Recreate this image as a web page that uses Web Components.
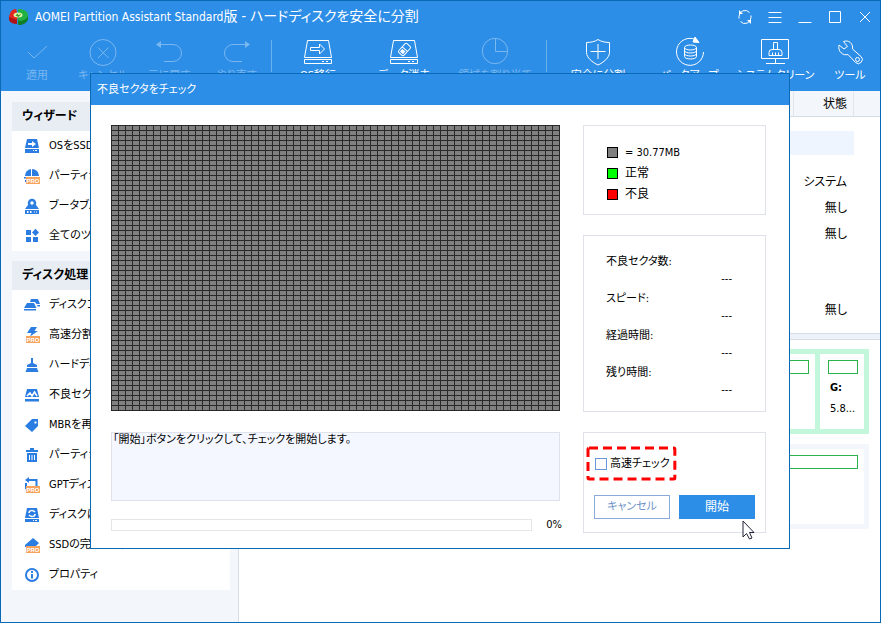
<!DOCTYPE html>
<html lang="ja">
<head>
<meta charset="utf-8">
<title>AOMEI Partition Assistant Standard版</title>
<style>
html, body { height: 100%; margin: 0; }
body {
  font: 11px/16px "DejaVu Sans Condensed", "Noto Sans CJK JP", sans-serif;
  font-feature-settings: "palt";
  color: #000;
  overflow: hidden;
  --blue: #2d8ee7;
  --edge: #0a69b5;
  --pale: #f3f6fb;
  --line: #dfe2eb;
}
</style>
</head>
<body>
<pa-window></pa-window>
<script>
const PRO = '<path d="M2 9h14v7H2z" fill="#f7a35c" stroke="none"/><text x="9" y="15" text-anchor="middle" font-family="Liberation Sans, sans-serif" font-size="6" font-weight="700" fill="#fff" stroke="none">PRO</text>';
const DISK = '<path d="M5.500 4.500h21l3 17h-27zM2.500 23.500h27v4h-27z"/><path d="M20 25.500h2M24 25.500h2"/>';
const ICONS = {
  check: [32, '<path d="M7 16l6 6L26 10"/>'],
  cancel: [32, '<circle cx="16" cy="16.500" r="13"/><path d="M11 11.500l10.500 10.500M21.500 11.500L11 22"/>'],
  undo: [32, '<path d="M5 8.500h15a8.500 8.500 0 0 1 0 17h-9"/><path d="M3 8.500l5-3.500v7z" fill="currentColor" stroke="none"/>'],
  redo: [32, '<path d="M27 8.500H12a8.500 8.500 0 0 0 0 17h9"/><path d="M29 8.500l-5-3.500v7z" fill="currentColor" stroke="none"/>'],
  migrate: [32, DISK + '<path d="M8.500 11.500h9V8l5 5-5 5v-3.500h-9z"/>'],
  erase: [32, DISK + '<g transform="rotate(42 16.500 13.500)"><rect x="13" y="7.500" width="7" height="12" rx="1.500"/><path d="M13 13h7"/><rect x="15" y="15" width="3" height="2.500" fill="currentColor"/></g>'],
  pie: [32, '<circle cx="16" cy="15" r="12.700"/><path d="M16.500 2.500v13h12.500"/>'],
  shield: [32, '<path d="M16 3.500c3 2 7 3 11.500 3v10c0 5-6 10-11.500 12.500C10.500 26.500 4.500 21.500 4.500 16.500v-10c4.500 0 8.500-1 11.500-3z"/><path d="M16 8v15M8.500 15.500h15"/>'],
  backup: [32, '<path d="M21.500 3.500a13.500 13.500 0 1 0 8 12.500"/><path d="M21 1l4 5.500-6-.500z" fill="currentColor"/><ellipse cx="16.500" cy="11.500" rx="6" ry="2.500"/><path d="M10.500 11.500v9c0 3.300 12 3.300 12 0v-9M10.500 14.500c0 3.300 12 3.300 12 0M10.500 17.500c0 3.300 12 3.300 12 0"/>'],
  clean: [32, '<path d="M2.500 3.500h27v19h-27zM16.500 22.500v5M7 27.500h19M14.500 13.500v-7h4v7M10 19.500v-3q0-3 3-3h7q3 0 3 3v3zM13.500 16.500v3M16.500 16.500v3M19.500 16.500v3"/>'],
  tool: [32, '<path d="M9.500 5.500c5-2 10 2 9 7.500l8.500 7.500a4 4 0 0 1-5.500 6L14 18.500C9 20 3.500 15.500 5 9l5 4 3.500-2.500z"/><circle cx="23.500" cy="23.500" r="2"/>'],
  sync: [16, '<path d="M2 9.500V7.500a6 6 0 0 1 10.500-4M14 6.500v2a6 6 0 0 1-10.500 4"/><path d="M2 1v4h4zM14 15v-4h-4z" fill="currentColor" stroke="none"/>'],
  menu: [16, '<path d="M1.500 3.500h13M1.500 8.500h13M1.500 13.500h13"/>'],
  min: [16, '<path d="M1.500 13.500h13"/>'],
  max: [16, '<path d="M2.500 2.500h11v11h-11z"/>'],
  close: [16, '<path d="M3 3l10 10M13 3L3 13"/>'],
  m_os: [16, '<path fill="currentColor" stroke="none" fill-rule="evenodd" d="M3 1h10l2 9H1zM1 11h14v4H1zM4 5v2h4v2l4-3-4-3v2zM9 12v1h1v-1zM11 12v1h2v-1z"/>'],
  m_part: [16, '<path fill="currentColor" stroke="none" d="M7 1a7 7 0 0 0-6 7h6zM8 1v7h7a7 7 0 0 0-7-7zM0 9h3v1.500H0zM1 12h2v2H1z"/>' + PRO],
  m_boot: [16, '<path fill="currentColor" stroke="none" fill-rule="evenodd" d="M1 12h14v4H1zM3 13v2h1.500v-2zM6 13v2h1.500v-2zM10 13.500v1h1v-1zM12 13.500v1h1v-1z"/><path fill="currentColor" stroke="none" d="M4 7h8l3 4H1z"/><circle cx="8" cy="5" r="3" stroke-width="2.500" fill="#fff"/>'],
  m_all: [16, '<path fill="currentColor" stroke="none" d="M2 2h5v5H2zM2 9h5v5H2zM9 9h5v5H9zM11.500.800L15 4.500 11.500 8 8 4.500z"/>'],
  m_copy: [16, '<path fill="currentColor" stroke="none" d="M7 2h7l2 5h-3.500L11 5H6zM3 6h7l2.500 5H0zM13 8h3v1.500h-2.500zM0 12h12v1.500H0z"/>'],
  m_quick: [16, '<path fill="currentColor" stroke="none" d="M7 0h6l-2.500 4H14L6 9.500 7.500 6H3z"/>' + PRO],
  m_wipe: [16, '<path fill="currentColor" stroke="none" d="M7 1h2v5l4 2v2H3V8l4-2zM3 11h10l1.500 4h-13z"/>'],
  m_bad: [16, '<path fill="currentColor" stroke="none" d="M3 2h10l2 8H1zM1 12h14v2.500H1z"/><path d="M3 9l3-3 2 3 2.500-4L13 9" stroke="#fff" stroke-width="1.500"/>'],
  m_mbr: [16, '<path fill="currentColor" stroke="none" fill-rule="evenodd" d="M8 2h6v7l-6 6-7-6zM10.500 4.500v2h2v-2z"/>'],
  m_del: [16, '<path fill="currentColor" stroke="none" fill-rule="evenodd" d="M6 1h4v2h4v2H2V3h4zM3 6h10v9H3zM5 8v5h1V8zM7.500 8v5h1V8zM10 8v5h1V8z"/>'],
  m_gpt: [16, '<path d="M3 3h9.500v6M2 6v6" stroke-width="2"/><path fill="currentColor" stroke="none" d="M5 0v6L1 3z"/>' + PRO],
  m_disk: [16, '<path fill="currentColor" stroke="none" fill-rule="evenodd" d="M3 1h10l2 10H1zM1 12h14v3H1zM9 13v1h1v-1zM11 13v1h2v-1z"/><path d="M5 6c0-3 4-3 6-1M11 7c0 3-4 3-6 1" stroke="#fff" stroke-width="1.500"/>'],
  m_ssd: [16, '<path fill="currentColor" stroke="none" d="M9 1l6 5-4 4H1V8z"/>' + PRO],
  m_info: [16, '<circle cx="8" cy="8" r="6" stroke-width="2"/><path d="M8 7v4.500M8 4v2" stroke-width="2"/>']
};

class PaElement extends HTMLElement {
  connectedCallback() {
    if (this.shadowRoot) return;
    this.attachShadow({ mode: 'open' }).innerHTML =
      '<style>*{box-sizing:border-box}button,input,textarea{font:inherit;font-feature-settings:inherit;color:inherit;margin:0}</style>' + this.view();
  }
}
const define = (name, view) => customElements.define(name, class extends PaElement { view() { return view(this); } });

define('pa-icon', el => {
  const [size, body] = ICONS[el.getAttribute('name')];
  return `<style>:host{display:block;flex:none}svg{display:block;overflow:visible}</style>
  <svg width="${size}" height="${size}" viewBox="0 0 ${size} ${size}" fill="none" stroke="currentColor" aria-hidden="true">${body}</svg>`;
});

define('pa-logo', () => `<style>:host{display:block}svg{display:block}</style>
<svg width="22" height="20" viewBox="0 0 22 20" aria-hidden="true">
<path d="M2 10v3c1 2.500 4 4 8 4v-5z" fill="#b01215"/><path d="M9 2C5 2 3 5 2 10l8 3 1-3-3-2 2-3z" fill="#e3261f"/>
<path d="M11 13l10-4v3c-1 4-5 6-10 6z" fill="#0e7d25"/><path d="M11 2c6 0 10 2 10 7-1 3-5 5-9 5l-2-3 5-2-4-3z" fill="#22b244"/>
<ellipse cx="11" cy="8" rx="4.500" ry="2.500" fill="#e3f2a8"/><path d="M8.500 8.500l2-2 1 1.500 3-1-3 3z" fill="#3da32d"/></svg>`);

define('pa-titlebar', () => `<style>
:host{display:flex;align-items:center;height:31px;padding-left:6px;color:#fff}
h1{flex:1;margin:0 0 0 6px;font-size:12px;line-height:20px;font-weight:400;white-space:nowrap}
h1 span{font-size:14px}
button{display:grid;place-items:center;width:30px;height:30px;padding:0;border:0;background:none}
</style><pa-logo></pa-logo><h1>AOMEI Partition Assistant Standard<span>版 - ハードディスクを安全に分割</span></h1>
${[['sync','更新'],['menu','メニュー'],['min','最小化'],['max','最大化'],['close','閉じる']].map(([i,l]) => `<button aria-label="${l}"><pa-icon name="${i}"></pa-icon></button>`).join('')}`);

define('pa-tool', el => `<style>
:host{display:block;min-width:0}
button{display:flex;flex-direction:column;align-items:center;width:100%;padding:4px 0 7px;border:0;background:none;color:#fff;white-space:nowrap}
button:disabled{color:#79b7f0}
</style><button ${el.hasAttribute('disabled') ? 'disabled' : ''}><pa-icon name="${el.getAttribute('icon')}"></pa-icon><slot></slot></button>`);

define('pa-toolbar', () => `<style>
:host{display:grid;grid-template-columns:66fr 66fr 66fr 69fr 1px 92fr 80fr 102fr 1px 102fr 81fr 90fr 60fr;padding-left:3px}
hr{width:1px;height:32px;margin:8px 0 0;border:0;background:#6cb0ee}
</style>
<pa-tool icon="check" disabled>適用</pa-tool><pa-tool icon="cancel" disabled>キャンセル</pa-tool><pa-tool icon="undo" disabled>元に戻す</pa-tool><pa-tool icon="redo" disabled>やり直す</pa-tool><hr>
<pa-tool icon="migrate">OS移行</pa-tool><pa-tool icon="erase">データ消去</pa-tool><pa-tool icon="pie" disabled>領域を割り当て</pa-tool><hr>
<pa-tool icon="shield">安全に分割</pa-tool><pa-tool icon="backup">バックアップ</pa-tool><pa-tool icon="clean">システムクリーン</pa-tool><pa-tool icon="tool">ツール</pa-tool>`);

define('pa-menu-item', el => `<style>
:host{display:block}
button{display:flex;align-items:center;gap:9px;width:100%;height:30px;padding:0 0 0 12px;border:0;background:none;text-align:left;white-space:nowrap}
pa-icon{color:#2b7de1}
</style><button><pa-icon name="${el.getAttribute('icon')}"></pa-icon><span><slot></slot></span></button>`);

define('pa-panel', el => `<style>
:host{display:block;background:#fff}
h2{margin:0;padding:0 10px;font-size:12px;line-height:29px;background:#e8edf3}
</style><h2>${el.getAttribute('heading')}</h2><nav><slot></slot></nav>`);

define('pa-sidebar', () => `<style>
:host{display:flex;flex-direction:column;gap:10px;padding:11px 8px 11px 11px;background:var(--pale);border-right:1px solid #d6dce8}
</style>
<pa-panel heading="ウィザード">
<pa-menu-item icon="m_os">OSをSSDに移行</pa-menu-item><pa-menu-item icon="m_part">パーティション拡張</pa-menu-item>
<pa-menu-item icon="m_boot">ブータブルCD作成</pa-menu-item><pa-menu-item icon="m_all">全てのツール</pa-menu-item></pa-panel>
<pa-panel heading="ディスク処理">
<pa-menu-item icon="m_copy">ディスクコピー</pa-menu-item><pa-menu-item icon="m_quick">高速分割</pa-menu-item>
<pa-menu-item icon="m_wipe">ハードディスク消去</pa-menu-item><pa-menu-item icon="m_bad">不良セクタチェック</pa-menu-item>
<pa-menu-item icon="m_mbr">MBRを再構築</pa-menu-item><pa-menu-item icon="m_del">パーティション削除</pa-menu-item>
<pa-menu-item icon="m_gpt">GPTディスクに変換</pa-menu-item><pa-menu-item icon="m_disk">ディスクに変換</pa-menu-item>
<pa-menu-item icon="m_ssd">SSDの完全消去</pa-menu-item><pa-menu-item icon="m_info">プロパティ</pa-menu-item></pa-panel>`);

define('pa-partitions', () => `<style>
:host{display:block;font-size:12px}
table{width:100%;border-collapse:separate;border-spacing:0;table-layout:fixed}
col.state{width:60px}col.end{width:26px}
th{height:26px;padding:0 6px 0 0;font-weight:400;text-align:right;background:var(--pale);border-bottom:1px solid #d6dce8}
th:not(:last-child){border-right:1px solid #e1e6ee}
td{height:26px;padding:0 7px 0 0;text-align:right;white-space:nowrap}
tr.gap td{height:14px}tr.blank td{height:50px}
tr.disk td{height:24px;background:#eef5ff}tr.disk td:last-child{background:none}
</style><table><colgroup><col><col class="state"><col class="end"></colgroup>
<thead><tr><th></th><th scope="col">状態</th><th></th></tr></thead>
<tbody><tr class="gap"><td colspan="3"></td></tr><tr class="disk"><td></td><td></td><td></td></tr><tr class="gap"><td colspan="3"></td></tr>
<tr><td></td><td>システム</td><td></td></tr><tr><td></td><td>無し</td><td></td></tr><tr><td></td><td>無し</td><td></td></tr>
<tr class="blank"><td colspan="3"></td></tr><tr><td></td><td>無し</td><td></td></tr></tbody></table>`);

define('pa-volume', () => `<style>
:host{display:block;background:#fff;padding:6px 6px 0 8px;min-height:75px}
i{display:block;height:14px;border:1px solid #2cb24a}
div{padding:3px 0 0 2px;line-height:21px}
</style><i></i><div><slot></slot></div>`);

define('pa-disks', () => `<style>
:host{display:flex;flex-direction:column;gap:10px;padding:9px 11px}
section{display:grid;gap:5px;padding:5px;background:var(--pale)}
.sel{grid-template-columns:1fr 44px;background:#c2f7dc}
</style><section class="sel"><pa-volume></pa-volume><pa-volume><b>G:</b><br>5.8...</pa-volume></section>
<section><pa-volume></pa-volume></section>`);

define('pa-main', () => `<style>
:host{display:block;background:#fff;min-width:0}
hr{height:7px;margin:10px 0 0;border:solid #d6dce8;border-width:1px 0;background:#edf2f9}
</style><pa-partitions></pa-partitions><hr><pa-disks></pa-disks>`);

define('pa-sector-map', () => `<style>
:host{display:block;height:286px;background:
 repeating-linear-gradient(90deg,#292929 0 1px,transparent 1px 7px),
 repeating-linear-gradient(#292929 0 1px,#808080 1px 5px)}
</style>`);

define('pa-box', () => `<style>:host{display:block;border:1px solid var(--line)}</style><slot></slot>`);

define('pa-legend', () => `<style>
:host{display:block}
ul{margin:0;padding:16px 23px 9px;list-style:none}
li{display:flex;align-items:center;gap:7px;line-height:21px}
li.k{font-size:12px}
i{width:11px;height:11px;border:1px solid #000;background:var(--c)}
</style><pa-box><ul><li style="--c:#808080"><i></i>= 30.77MB</li><li class="k" style="--c:#0f0"><i></i>正常</li><li class="k" style="--c:#f00"><i></i>不良</li></ul></pa-box>`);

define('pa-stats', () => `<style>
:host{display:block}
dl{margin:0;padding:16px 33px 11px 22px}
dt{line-height:20px}dd{margin:0 0 4px;line-height:13px;text-align:right}
</style><pa-box><dl><dt>不良セクタ数:</dt><dd>---</dd><dt>スピード:</dt><dd>---</dd><dt>経過時間:</dt><dd>---</dd><dt>残り時間:</dt><dd>---</dd></dl></pa-box>`);

define('pa-actions', () => `<style>
:host{display:block;position:relative}
.in{padding:14px 10px 13px 3px}
label{position:relative;display:inline-flex;align-items:center;gap:3px;height:33px;padding:0 6px 0 8px;vertical-align:top}
label svg{position:absolute;inset:0;width:100%;height:100%;overflow:visible}
input{appearance:none;width:12px;height:12px;border:1px solid #6a97d8;background:#fff}
.row{display:flex;gap:9px;margin:15px 0 0 7px}
button{flex:1;height:24px;padding:0;border:1px solid #8aaadb;background:#fff;color:#6f94c9}
button.go{border-color:var(--blue);background:var(--blue);color:#fff;font-size:12px}
.cursor{position:absolute;right:11px;bottom:-7px}
</style><pa-box><div class="in">
<label><input type="checkbox">高速チェック<svg aria-hidden="true"><rect x="1" y="1" width="98%" height="94%" rx="1" fill="none" stroke="#f00" stroke-width="3" stroke-dasharray="9 5"/></svg></label>
<div class="row"><button>キャンセル</button><button class="go">開始</button></div></div></pa-box>
<svg class="cursor" width="13" height="20" viewBox="0 0 13 20" aria-hidden="true"><path d="M1 1v16l3.500-3.500L7.500 19l2.500-1-2.500-5.500H12z" fill="#fff" stroke="#222236"/></svg>`);

define('pa-dialog', () => `<style>
:host{display:block;background:#fff;border:1px solid var(--edge)}
h2{margin:0;padding:0 6px;font-size:11px;line-height:31px;font-weight:400;color:#fff;background:var(--blue)}
.body{display:grid;grid-template-columns:1fr 183px;column-gap:23px;padding:20px 23px 15px 20px}
.left{display:flex;flex-direction:column;gap:21px;min-width:0}
.right{display:flex;flex-direction:column;gap:20px}
textarea{display:block;width:100%;height:69px;padding:0 1px;border:1px solid var(--line);background:#f4f7ff;resize:none;line-height:14px}
.run{display:flex;align-items:center;gap:14px;line-height:12px;margin-top:-3px}
progress{appearance:none;flex:1;height:12px;border:1px solid #e6e6ea;background:#fff}
progress::-webkit-progress-bar{background:#fff}
progress::-webkit-progress-value{background:var(--blue)}
span{margin-right:-2px}
</style><h2>不良セクタをチェック</h2><div class="body">
<div class="left"><pa-sector-map></pa-sector-map>
<textarea readonly aria-label="メッセージ">「開始」ボタンをクリックして、チェックを開始します。</textarea>
<div class="run"><progress value="0" max="100" aria-label="進行状況"></progress><span>0%</span></div></div>
<div class="right"><pa-legend></pa-legend><pa-stats></pa-stats><pa-actions></pa-actions></div></div>`);

define('pa-window', () => `<style>
:host{display:flex;flex-direction:column;position:relative;min-height:100%;height:100vh;border:1px solid var(--edge);box-sizing:border-box;background:#fff;overflow:hidden}
header{background:var(--blue)}
.work{flex:1;display:grid;grid-template-columns:238px 1fr}
pa-dialog{position:absolute;top:72px;left:89px;right:90px}
</style><header><pa-titlebar></pa-titlebar><pa-toolbar></pa-toolbar></header>
<div class="work"><pa-sidebar></pa-sidebar><pa-main></pa-main></div><pa-dialog role="dialog" aria-label="不良セクタをチェック"></pa-dialog>`);
</script>
</body>
</html>
